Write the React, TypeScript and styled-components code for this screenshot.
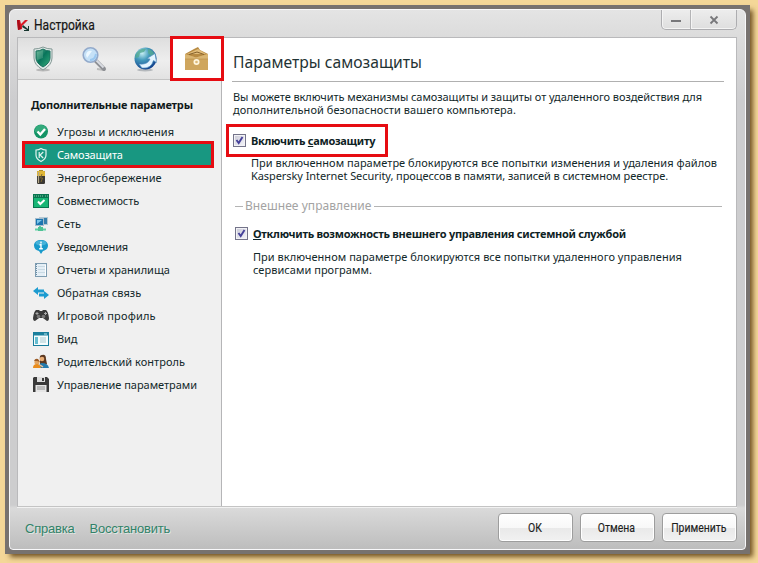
import React from "react";
import styled, { createGlobalStyle, css } from "styled-components";

const GlobalStyle = createGlobalStyle`
  * { box-sizing: border-box; }
  body { margin: 0; background: #f3d594; }
`;

const Desktop = styled.div`
  width: 758px;
  height: 563px;
  padding: 5px 0 0 5px;
  overflow: hidden;
  background: #f4d798;
  font: 11px/13px "Noto Sans", "Open Sans", sans-serif;
  color: #12282a;
`;

const Frame = styled.div`
  width: 745px;
  height: 549px;
  padding: 4px;
  background: #77726f;
  box-shadow: 4px 4px 5px -1px rgba(90, 60, 15, 0.85);
`;

const Window = styled.div`
  width: 737px;
  height: 541px;
  display: flex;
  flex-direction: column;
  border: 1px solid #f8f8fa;
  border-radius: 6px 6px 4px 4px;
  padding: 0 8px 0 7px;
  background: linear-gradient(180deg, #e4e4e4 0, #dcdcdc 26px, #cdcdcf 90px, #cdcdce 495px, #dadada 498px, #bdbdbd 539px);
`;

const TitleBar = styled.header`
  height: 27px;
  flex: none;
  display: flex;
  align-items: flex-start;
  justify-content: space-between;
`;

const TitleGroup = styled.div`
  display: flex;
  align-items: center;
  gap: 4px;
  padding-top: 6px;
`;

const WindowTitle = styled.span`
  font: 14px/18px Roboto, sans-serif;
  color: #161616;
  white-space: nowrap;
  transform: scaleX(0.86);
  transform-origin: 0 50%;
  -webkit-text-stroke: 0.2px #161616;
`;

const Controls = styled.div`
  display: flex;
  width: 76px;
  height: 20px;
  border: 1px solid #adadb0;
  border-top: 0;
  border-radius: 0 0 5px 5px;
  background: linear-gradient(#ededed, #dedede);
  box-shadow: inset 0 -1px #f4f4f4, inset 1px 0 #f4f4f4;
`;

const Control = styled.button<{ $width: number }>`
  width: ${(p) => p.$width}px;
  padding: 0;
  border: 0;
  background: none;
  display: flex;
  align-items: center;
  justify-content: center;
  & + & { border-left: 1px solid #b4b4b6; box-shadow: inset 1px 0 #f4f4f4; }
`;

const Body = styled.div`
  width: 720px;
  height: 470px;
  flex: none;
  display: flex;
  border: 1px solid #b9b9bb;
  border-bottom-color: #c4c4c4;
  background: #fff;
  box-shadow: 0 1px #f2f2f2;
`;

const Sidebar = styled.aside`
  width: 204px;
  flex: none;
  background: #f0f0f0;
  border-right: 1px solid #b5b5b7;
`;

const Tabs = styled.nav`
  height: 42px;
  display: flex;
  background: linear-gradient(#dedede, #eeeeee 55%, #e2e2e2);
  border-bottom: 1px solid #c4c4c4;
`;

const Tab = styled.button<{ $active?: boolean }>`
  width: 51px;
  height: 41px;
  flex: none;
  padding: 0 1px 0 0;
  border: 0;
  background: none;
  display: flex;
  align-items: center;
  justify-content: center;
  ${(p) => p.$active && css`
    width: 54px;
    height: 45px;
    margin: -2px 0 0 -1px;
    padding-right: 2px;
    border: 3px solid #e60c12;
    background: #fff;
  `}
`;

const SectionTitle = styled.h2`
  margin: 0;
  padding: 18px 0 9px 13px;
  font: bold 11px/13px "Noto Sans", sans-serif;
  letter-spacing: -0.2px;
  color: #10191a;
  white-space: nowrap;
`;

const Menu = styled.ul`
  margin: 0;
  padding: 0 7px 0 4px;
  list-style: none;
`;

const MenuItem = styled.li<{ $active?: boolean; $spacing: number }>`
  height: 23px;
  display: flex;
  align-items: center;
  gap: 8px;
  padding-left: 11px;
  line-height: 23px;
  letter-spacing: ${(p) => p.$spacing}px;
  white-space: nowrap;
  svg { flex: none; }
  ${(p) => p.$active && css`
    height: 27px;
    margin: -2px 0;
    padding-left: 8px;
    border: 3px solid #e60c12;
    background: #189781;
    color: #fff;
    line-height: 21px;
  `}
`;

const Content = styled.main`
  flex: 1;
  padding: 13px 12px 0 10px;
`;

const Heading = styled.h1`
  height: 31px;
  margin: 0 0 8px;
  padding-left: 1px;
  border-bottom: 1px solid #b0b0b0;
  font: 17px/22px "Noto Sans", sans-serif;
  color: #1f3334;
`;

const HeadingText = styled.span`
  display: inline-block;
  white-space: nowrap;
  transform: scaleX(0.922);
  transform-origin: 0 50%;
`;

const Paragraph = styled.p<{ $indent: number; $gap?: number }>`
  margin: 0;
  padding: ${(p) => p.$gap ?? 0}px 0 0 ${(p) => p.$indent}px;
`;

const Line = styled.span<{ $spacing: number }>`
  display: block;
  white-space: nowrap;
  letter-spacing: ${(p) => p.$spacing}px;
`;

const Option = styled.label<{ $highlighted?: boolean }>`
  display: flex;
  align-items: center;
  font-weight: bold;
  letter-spacing: ${(p) => (p.$highlighted ? -0.3 : -0.28)}px;
  color: #0e2224;
  white-space: nowrap;
  ${(p) => p.$highlighted ? css`
    width: 162px;
    height: 33px;
    margin: 8px 0 -1px -6px;
    padding-left: 4px;
    gap: 5px;
    border: 3px solid #e60c12;
  ` : css`
    margin: 13px 0 0 3px;
    height: 13px;
    gap: 5px;
  `}
`;

const CheckBox = styled.span`
  width: 13px;
  height: 13px;
  flex: none;
  display: flex;
  border: 1px solid #74748a;
  background: linear-gradient(135deg, #c9c9d6, #f6f6fb);
  box-shadow: inset 0 0 0 1px #f2f2f6;
`;

const Divider = styled.div`
  display: flex;
  align-items: center;
  gap: 2px;
  height: 16px;
  margin-top: 16px;
  padding: 0 2px 0 3px;
  font-size: 12px;
  line-height: 16px;
  letter-spacing: 0.06px;
  color: #a3a3a3;
  white-space: nowrap;
  &::before { content: ""; width: 8px; height: 1px; background: #b4b4b4; }
  &::after { content: ""; flex: 1; height: 1px; background: #b4b4b4; }
`;

const Footer = styled.footer`
  flex: 1;
  display: flex;
  align-items: flex-start;
  justify-content: space-between;
  padding: 6px 0 0 8px;
`;

const Links = styled.div`
  display: flex;
  gap: 15px;
  padding-top: 7px;
`;

const FooterLink = styled.a`
  font: 13px/17px "Liberation Sans", Arial, sans-serif;
  letter-spacing: -0.22px;
  color: #328268;
  text-shadow: 1px 1px #e0e6e3;
`;

const Buttons = styled.div`
  display: flex;
  gap: 7px;
`;

const Button = styled.button`
  width: 75px;
  height: 29px;
  padding: 0 2px 0 0;
  border: 1px solid #9d9d9d;
  border-radius: 4px;
  background: linear-gradient(#fff, #f8f8f8 50%, #e9e9e9 51%, #f1f1f1);
  box-shadow: inset 0 0 0 1px #fff;
  font: 12px/16px Roboto, sans-serif;
  color: #1d1d1d;
  -webkit-text-stroke: 0.15px #1d1d1d;
`;

const ButtonLabel = styled.span`
  display: inline-block;
  transform: scaleX(0.87);
`;

const LogoIcon = () => (
  <svg width="13" height="13" viewBox="0 0 13 13">
    <path d="M0 1h3l1 4 4-4h3L5 7v3L1 11Z" fill="#d91a26" />
    <path d="M0 1h2l2 9-3 1Z" fill="#a80d19" />
    <path d="M6 6l5 4V7h1v5H7v-1h3L5 8Z" fill="#17362f" />
  </svg>
);

const ShieldTab = () => (
  <svg width="22" height="26" viewBox="0 0 22 26">
    <defs>
      <linearGradient id="shieldFill" x2="1" y2="1">
        <stop stopColor="#67b795" /><stop offset=".45" stopColor="#08745b" /><stop offset="1" stopColor="#34ae7c" />
      </linearGradient>
    </defs>
    <ellipse cx="11" cy="24" rx="7" ry="1.5" fill="#b8b8b8" />
    <path d="M2 3Q7 3 11 1q4 2 9 2v9q0 7-9 12Q2 19 2 12Z" fill="#dfe9e7" stroke="#839895" />
    <path d="M4 5q4 0 7-2 3 2 7 2v7q0 5-7 9-7-4-7-9Z" fill="url(#shieldFill)" stroke="#1c715e" />
    <path d="M5 6q3 0 6-2v8L5 14Z" fill="#9ad0b9" opacity=".25" />
  </svg>
);

const SearchTab = () => (
  <svg width="26" height="26" viewBox="0 0 26 26">
    <path d="M16 23l7 1" stroke="#bbb" strokeWidth="2" />
    <path d="M15 15l8 8" stroke="#8d8f94" strokeWidth="4" strokeLinecap="round" />
    <path d="M15.5 14.5l7 7" stroke="#d9dce2" strokeWidth="2" />
    <circle cx="9.5" cy="9" r="7.3" fill="#c5e1f7" stroke="#93aacb" strokeWidth="1.6" />
    <path d="M5 9q1-5 6-4l-5 7Z" fill="#edf8ff" />
    <path d="M9 14q5 0 6-6" fill="none" stroke="#9ac8f0" strokeWidth="2" />
  </svg>
);

const GlobeTab = () => (
  <svg width="25" height="26" viewBox="0 0 25 26">
    <defs>
      <radialGradient id="globeFill" cx=".35" cy=".25" r=".8">
        <stop stopColor="#c9f0f4" /><stop offset=".4" stopColor="#459cbd" /><stop offset="1" stopColor="#103e8b" />
      </radialGradient>
    </defs>
    <ellipse cx="12" cy="24" rx="8" ry="1.5" fill="#b4b8bc" />
    <circle cx="12.5" cy="12.5" r="11" fill="url(#globeFill)" />
    <path d="M3 8q4-6 10-5l-2 3-4 1-1 4-4 1ZM15 3q5 1 7 6l-4 1-3-3Z" fill="#55aa92" opacity=".8" />
    <path d="M6 18q9 1 11-5l-3-.5 8-5 1.500 9-3-2Q18 23 9 22Z" fill="#e5f5ff" stroke="#4c8cbd" strokeWidth=".6" />
  </svg>
);

const BoxTab = () => (
  <svg width="25" height="25" viewBox="0 0 25 25">
    <path d="M1 8 10 3l4-2 2 3 8 4v4H1Z" fill="#b78a42" />
    <path d="M3 8 14 3l8 5Z" fill="#e2bd7a" />
    <path d="M5 8.500 13 6l7 2.500" fill="none" stroke="#84602b" />
    <path d="M1 8l11 3.500L24 8v16H1Z" fill="#cfa65e" />
    <path d="M1 8l11 3.500L24 8v5H1Z" fill="#d9b572" />
    <path d="M1 13h23" stroke="#b98e48" strokeWidth=".6" />
    <circle cx="12.500" cy="16" r="2.200" fill="#dcb979" stroke="#fff5dd" strokeWidth="1.700" />
  </svg>
);

type IconName =
  | "threats" | "shield" | "battery" | "compat" | "network" | "info"
  | "report" | "arrows" | "gamepad" | "view" | "family" | "disk";

const drawings: Record<IconName, React.ReactNode> = {
  threats: <>
    <circle cx="8" cy="7.5" r="7" fill="#139466" /><path d="M2 8a6 6 0 0 1 12-2L9 9Z" fill="#49b98a" opacity=".6" />
    <path d="M4.5 7.5 7.3 10.5 12 5" fill="none" stroke="#fff" strokeWidth="2.3" />
  </>,
  shield: <>
    <path d="M3 3q3 0 5-1.5Q10 3 13 3v5q0 4-5 6.5Q3 12 3 8Z" fill="none" stroke="#e2f4ef" strokeWidth="1.2" />
    <path d="M6.2 5v6M10.3 5 7 8l3.2 3" fill="none" stroke="#e2f4ef" strokeWidth="1.2" />
  </>,
  battery: <>
    <rect x="6" y="0" width="4" height="2" fill="#a78b2f" /><rect x="4" y="1" width="8" height="13" rx="1.2" fill="#3b3834" />
    <path d="M4 2q0-1 1-1h6q1 0 1 1v4H4Z" fill="#e1b737" /><path d="M5.5 2v11" stroke="#b4a98a" strokeWidth="1.2" />
    <path d="M9 4 7.5 8h2L8 12" fill="none" stroke="#806b30" />
  </>,
  compat: <>
    <rect x="0" y="1" width="16" height="14" fill="#087650" /><rect x="1" y="5" width="14" height="9" fill="#18b675" />
    <path d="M1 3h10M12 3h3" stroke="#89c8aa" strokeDasharray="1 1" /><path d="M5 8.5l2.3 2.5L11.5 7" fill="none" stroke="#fff" strokeWidth="2" />
  </>,
  network: <>
    <rect x="6.5" y="1.5" width="8" height="7" fill="#347fac" stroke="#b5c8d3" />
    <rect x="2.5" y="2.5" width="8" height="7" fill="#1c75b0" stroke="#a5bccc" /><path d="M4 4h5l-5 4Z" fill="#7bc6eb" />
    <path d="M7 10v3M2 13.5h11" stroke="#5fd0a4" strokeWidth="2" /><rect x="5" y="11" width="5" height="4" fill="#4fc295" />
  </>,
  info: <>
    <path d="M8 1c4 0 7 2 7 5.5 0 3-2.3 5-5 5.5l-2 3-2-3c-3-.5-5-2.500-5-5.500C1 3 4 1 8 1Z" fill="#189acb" />
    <ellipse cx="8" cy="4" rx="5.5" ry="2.5" fill="#74c9e8" opacity=".5" />
    <path d="M8 2.500v2M6.500 5.700H8v4M6.200 9.700h3.600" stroke="#fff" strokeWidth="1.400" fill="none" />
  </>,
  report: <>
    <rect x="2.5" y="1.5" width="11" height="13" fill="#e5eff6" stroke="#7d9cb1" /><path d="M3.500 2v12" stroke="#6d8da5" strokeDasharray="1 1" />
    <path d="M5 4.500h7M5 7.500h7M5 10.500h7" stroke="#c9dae4" /><path d="M12.5 3v11" stroke="#fff" />
  </>,
  arrows: <path d="M0 6l5-4v2.500h6v3H5V10ZM16 10l-5 4v-2.500H6v-3h5V6Z" fill="#1c9bd0" />,
  gamepad: <>
    <path d="M3 2h3l1 1h2l1-1h3q2 1 3 8 0 3-2 3l-4-3H6l-4 3q-2 0-2-3 1-7 3-8Z" fill="#3b3b3b" />
    <circle cx="5.500" cy="8.500" r="1.8" fill="#777" /><circle cx="10.500" cy="8.500" r="1.8" fill="#777" />
    <path d="M2.5 5.500h3M4 4v3M11 5.500h3M12.500 4v3" stroke="#aaa" />
  </>,
  view: <>
    <rect x=".5" y="1.5" width="15" height="13" fill="#f4fcfd" stroke="#187d9c" /><path d="M1 3h14" stroke="#1b809d" strokeWidth="3" />
    <rect x="2" y="6" width="3" height="7" fill="#66bdd0" /><path d="M7 7h6M7 9h6M7 11h6" stroke="#aac9cf" /><path d="M11 3h3" stroke="#b6e4ec" />
  </>,
  family: <>
    <path d="M7 6q-1-5 2-5 4-1 4 4l1 5H7Z" fill="#5b371f" /><circle cx="9" cy="5" r="2.3" fill="#e8ac74" />
    <path d="M6 14q0-5 3-5 6 0 7 5Z" fill="#247aac" /><circle cx="4" cy="8" r="2.6" fill="#e3a561" />
    <path d="M1 7q1-3 4-2l2 3-3-1Z" fill="#9c5b26" /><path d="M0 14q0-4 4-4 3 0 4 4Z" fill="#e98d1e" /><path d="M7 11l3 2" stroke="#f3c398" strokeWidth="1.5" />
  </>,
  disk: <>
    <path d="M1 0h13l2 2v13H0V1Z" fill="#3a3a3a" /><rect x="4" y="0" width="8" height="5" fill="#dedede" /><rect x="9" y="1" width="2" height="3" fill="#3a3a3a" />
    <rect x="2.5" y="8" width="11" height="7" fill="#e5e5e5" /><path d="M4 10h8M4 12h8" stroke="#929292" />
  </>,
};

const MenuIcon = ({ name }: { name: IconName }) => (
  <svg width="16" height="16" viewBox="0 0 16 16">{drawings[name]}</svg>
);

const menu: { icon: IconName; label: string; spacing: number }[] = [
  { icon: "threats", label: "Угрозы и исключения", spacing: 0.02 },
  { icon: "shield", label: "Самозащита", spacing: -0.18 },
  { icon: "battery", label: "Энергосбережение", spacing: 0.16 },
  { icon: "compat", label: "Совместимость", spacing: -0.08 },
  { icon: "network", label: "Сеть", spacing: 0 },
  { icon: "info", label: "Уведомления", spacing: -0.18 },
  { icon: "report", label: "Отчеты и хранилища", spacing: -0.02 },
  { icon: "arrows", label: "Обратная связь", spacing: 0 },
  { icon: "gamepad", label: "Игровой профиль", spacing: 0.18 },
  { icon: "view", label: "Вид", spacing: -0.1 },
  { icon: "family", label: "Родительский контроль", spacing: 0.025 },
  { icon: "disk", label: "Управление параметрами", spacing: -0.02 },
];

const Check = () => (
  <CheckBox>
    <svg width="11" height="11" viewBox="0 0 11 11">
      <path d="M2.5 5 4.7 8 8.5 2" fill="none" stroke="#45419a" strokeWidth="1.9" />
    </svg>
  </CheckBox>
);

export default function App() {
  return (
    <>
      <GlobalStyle />
      <Desktop>
        <Frame>
          <Window>
            <TitleBar>
              <TitleGroup>
                <LogoIcon />
                <WindowTitle>Настройка</WindowTitle>
              </TitleGroup>
              <Controls>
                <Control $width={28} aria-label="Свернуть">
                  <svg width="12" height="12"><path d="M1 7h10" stroke="#77777a" strokeWidth="2" /></svg>
                </Control>
                <Control $width={46} aria-label="Закрыть">
                  <svg width="10" height="10"><path d="M1.500 1.500l7 7M8.500 1.500l-7 7" stroke="#77777a" strokeWidth="1.8" /></svg>
                </Control>
              </Controls>
            </TitleBar>
            <Body>
              <Sidebar>
                <Tabs>
                  <Tab><ShieldTab /></Tab>
                  <Tab><SearchTab /></Tab>
                  <Tab><GlobeTab /></Tab>
                  <Tab $active><BoxTab /></Tab>
                </Tabs>
                <SectionTitle>Дополнительные параметры</SectionTitle>
                <Menu>
                  {menu.map(({ icon, label, spacing }) => (
                    <MenuItem key={icon} $active={icon === "shield"} $spacing={spacing}>
                      <MenuIcon name={icon} />
                      {label}
                    </MenuItem>
                  ))}
                </Menu>
              </Sidebar>
              <Content>
                <Heading><HeadingText>Параметры самозащиты</HeadingText></Heading>
                <Paragraph $indent={1}>
                  <Line $spacing={-0.069}>Вы можете включить механизмы самозащиты и защиты от удаленного воздействия для</Line>
                  <Line $spacing={0.059}>дополнительной безопасности вашего компьютера.</Line>
                </Paragraph>
                <Option $highlighted>
                  <Check />
                  <span>Включить <u>с</u>амозащиту</span>
                </Option>
                <Paragraph $indent={19}>
                  <Line $spacing={0.035}>При включенном параметре блокируются все попытки изменения и удаления файлов</Line>
                  <Line $spacing={-0.069}>Kaspersky Internet Security, процессов в памяти, записей в системном реестре.</Line>
                </Paragraph>
                <Divider>Внешнее управление</Divider>
                <Option>
                  <Check />
                  <span><u>О</u>тключить возможность внешнего управления системной службой</span>
                </Option>
                <Paragraph $indent={21} $gap={10}>
                  <Line $spacing={0.041}>При включенном параметре блокируются все попытки удаленного управления</Line>
                  <Line $spacing={0.04}>сервисами программ.</Line>
                </Paragraph>
              </Content>
            </Body>
            <Footer>
              <Links>
                <FooterLink>Справка</FooterLink>
                <FooterLink>Восстановить</FooterLink>
              </Links>
              <Buttons>
                <Button><ButtonLabel>ОК</ButtonLabel></Button>
                <Button><ButtonLabel>Отмена</ButtonLabel></Button>
                <Button><ButtonLabel>Применить</ButtonLabel></Button>
              </Buttons>
            </Footer>
          </Window>
        </Frame>
      </Desktop>
    </>
  );
}
